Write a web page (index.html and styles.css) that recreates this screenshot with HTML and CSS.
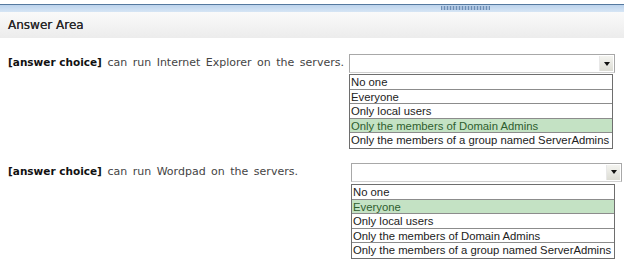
FILE: index.html
```html
<!DOCTYPE html>
<html lang="en">
<head>
    <meta charset="UTF-8" />
    <title>Answer Area</title>
    <link rel="stylesheet" href="styles.css">
</head>
<body>
<div class="topbar">
    <span class="grip"></span>
</div>
<div class="header">Answer Area</div>

<div class="row row-first">
    <p class="prompt"><b>[answer choice]</b> can run Internet Explorer on the servers.</p>
    <div class="choice">
        <div class="select"><span class="arrow"></span></div>
        <ul class="options">
            <li>No one</li>
            <li>Everyone</li>
            <li>Only local users</li>
            <li class="picked">Only the members of Domain Admins</li>
            <li>Only the members of a group named ServerAdmins</li>
        </ul>
    </div>
</div>

<div class="row row-second">
    <p class="prompt"><b>[answer choice]</b> can run Wordpad on the servers.</p>
    <div class="choice">
        <div class="select"><span class="arrow"></span></div>
        <ul class="options">
            <li>No one</li>
            <li class="picked">Everyone</li>
            <li>Only local users</li>
            <li>Only the members of Domain Admins</li>
            <li>Only the members of a group named ServerAdmins</li>
        </ul>
    </div>
</div>
</body>
</html>
```

FILE: styles.css
```css
* { box-sizing: border-box; }
body {
    margin: 0;
    padding-top: 4px;
    background: #fff;
    font-family: 'DejaVu Sans', Verdana, sans-serif;
    color: #333;
    width: 624px;
    height: 264px;
    overflow: hidden;
}
.topbar {
    height: 8px;
    border-top: 1px solid #55799f;
    background: linear-gradient(#bcd3ec, #d6e5f5);
    display: flex;
    padding-left: 441px;
}
.grip {
    width: 49px;
    height: 4px;
    margin-top: 1px;
    background: repeating-linear-gradient(90deg, #6f8fb5 0 1px, #a9c1de 1px 3px);
}
.header {
    height: 26px;
    padding: 6px 8px 0;
    font-size: 12px;
    color: #2a2a2a;
    text-shadow: 0 0 0.4px #2a2a2a;
    background: linear-gradient(#fafafa, #ececec);
}

.row {
    display: flex;
    align-items: flex-start;
    padding-left: 8px;
}
.row-first { margin-top: 16px; }
.row-second { margin-top: 14px; }
.prompt {
    margin: 0;
    padding-top: 2px;
    font-size: 11px;
    word-spacing: 2px;
    color: #444;
    white-space: nowrap;
}
.prompt b {
    font-size: 10.5px;
    word-spacing: 0;
    color: #111;
}
.row-first .prompt { width: 341px; }
.row-second .prompt { width: 343px; }

.select {
    width: 266px;
    height: 19px;
    border: 1px solid #a8a8a8;
    border-bottom-color: #d0d0d0;
    background: #fff;
    display: flex;
    justify-content: flex-end;
    align-items: center;
    padding-right: 1px;
}
.row-second .select { width: 271px; }
.arrow {
    width: 14px;
    height: 15px;
    background: linear-gradient(#f4f4f0, #dcdcd4);
    border-left: 1px solid #e8e8e8;
    display: flex;
    justify-content: center;
    align-items: center;
}
.arrow::after {
    content: '';
    border-left: 3px solid transparent;
    border-right: 3px solid transparent;
    border-top: 4px solid #111;
}
.options {
    list-style: none;
    margin: 1px 0 0;
    padding: 0;
    width: 264px;
    border: 1px solid #6e6e6e;
    font-family: 'Liberation Sans', Arial, sans-serif;
    font-size: 11.3px;
    color: #222;
}
.row-second .options { margin-top: 2px; }
.options li {
    height: 14.6px;
    line-height: 14px;
    padding-left: 1px;
    border-bottom: 1px solid #8c8c8c;
    white-space: nowrap;
}
.options li:last-child { border-bottom: none; }
.options li.picked {
    background: #c4e2c4;
    color: #2f5e2f;
}
```
